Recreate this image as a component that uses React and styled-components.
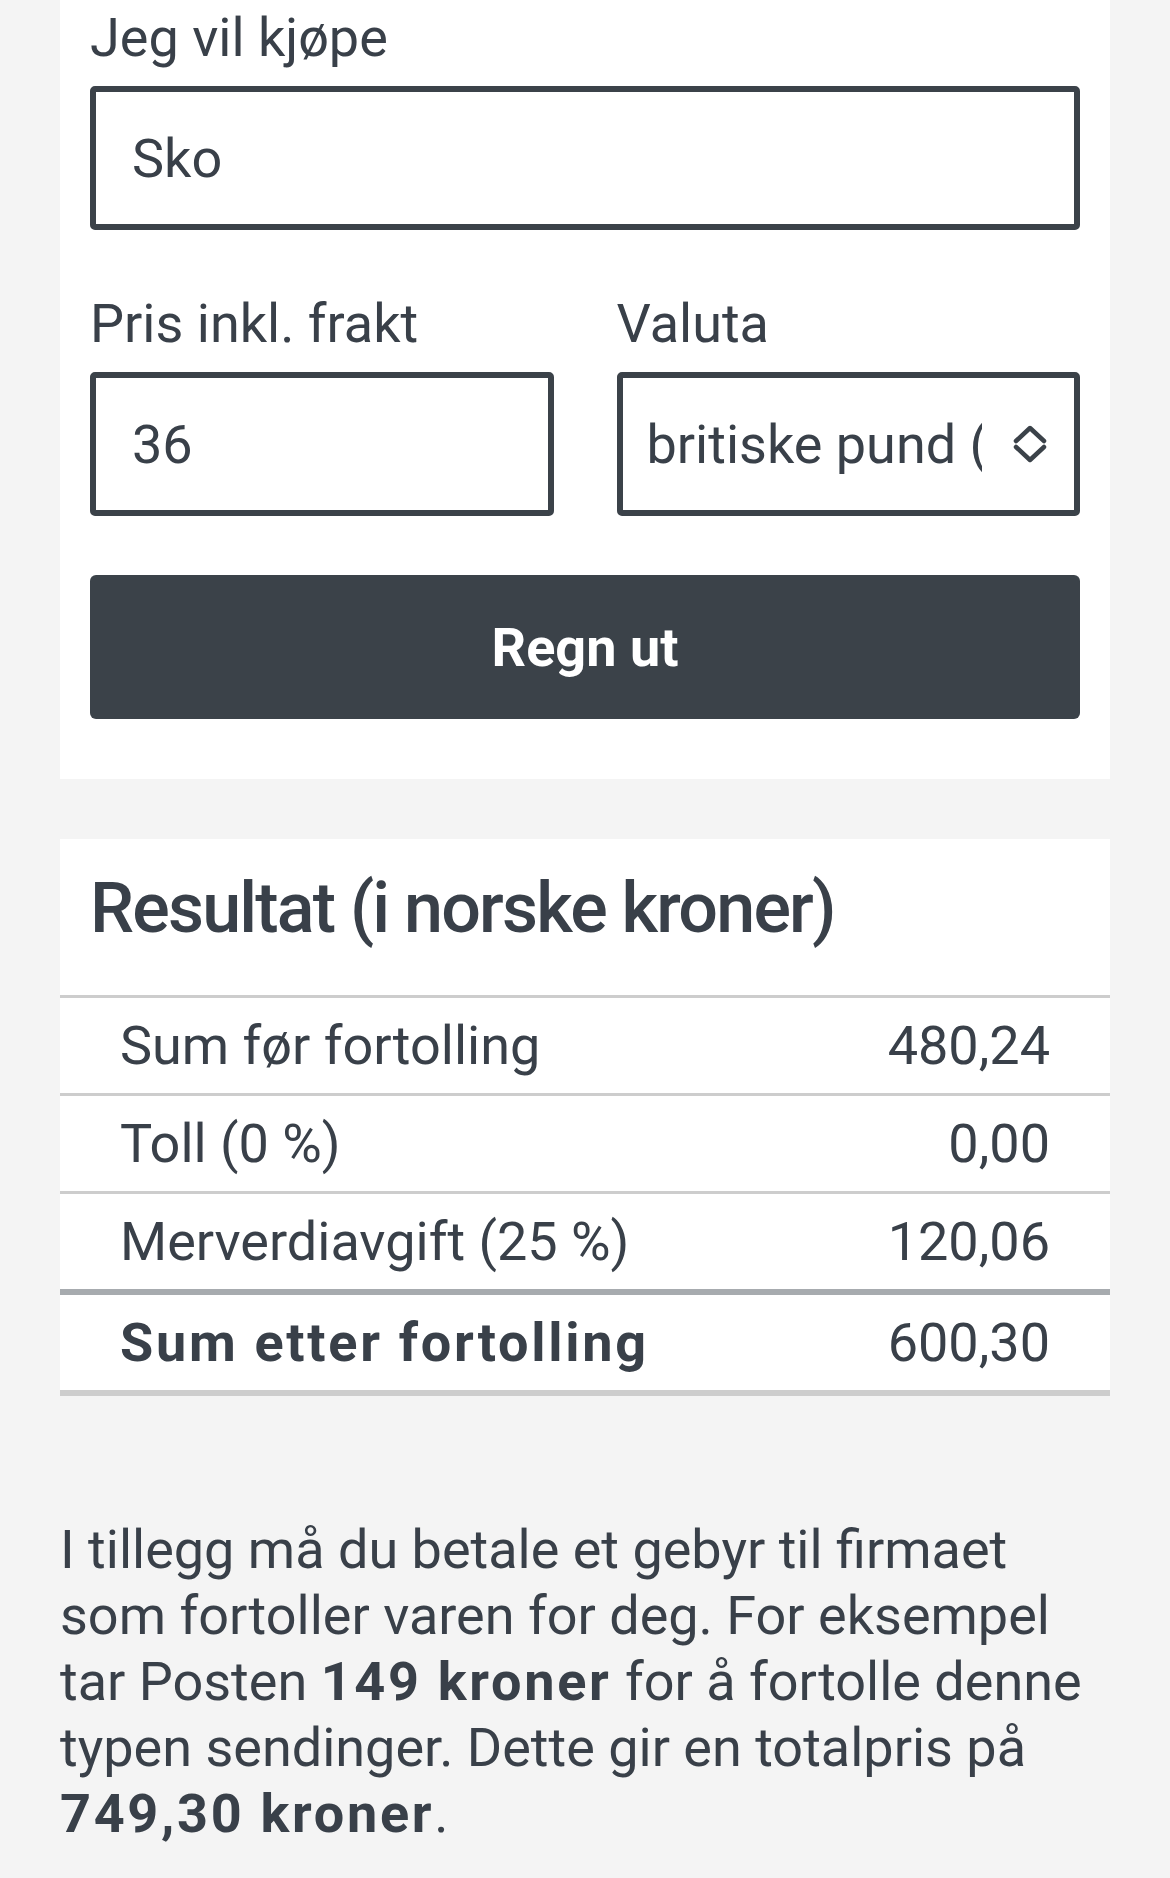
import React from "react"
import styled, { createGlobalStyle } from "styled-components"

const currencies = [
  "amerikanske dollar (USD)",
  "britiske pund (GBP)",
  "euro (EUR)",
  "svenske kroner (SEK)",
]

const resultRows = [
  { label: "Sum før fortolling", value: "480,24" },
  { label: "Toll (0 %)", value: "0,00" },
  { label: "Merverdiavgift (25 %)", value: "120,06" },
]

const GlobalStyle = createGlobalStyle`
  html, body {
    margin: 0;
    padding: 0;
    background: #f4f4f4;
  }
  body {
    font-family: Roboto, "Noto Sans", "Liberation Sans", sans-serif;
    color: #394049;
  }
  * {
    box-sizing: border-box;
  }
`

const App = () => {
  return (
    <>
      <GlobalStyle />
      <Page>
        <FormCard>
          <Field $space={64}>
            <Label htmlFor="item">Jeg vil kjøpe</Label>
            <TextInput id="item" type="text" defaultValue="Sko" />
          </Field>
          <FieldRow>
            <Field>
              <Label htmlFor="price">Pris inkl. frakt</Label>
              <TextInput id="price" type="text" inputMode="decimal" defaultValue="36" />
            </Field>
            <Field>
              <Label htmlFor="currency">Valuta</Label>
              <SelectWrap>
                <Select id="currency" defaultValue="britiske pund (GBP)">
                  {currencies.map(c => (
                    <option key={c} value={c}>
                      {c}
                    </option>
                  ))}
                </Select>
                <SelectIcon viewBox="0 0 34 40" aria-hidden="true">
                  <path d="M3 17 L17 4 L31 17" />
                  <path d="M3 23 L17 36 L31 23" />
                </SelectIcon>
              </SelectWrap>
            </Field>
          </FieldRow>
          <SubmitButton type="button">Regn ut</SubmitButton>
        </FormCard>

        <ResultCard>
          <ResultTitle>Resultat (i norske kroner)</ResultTitle>
          <ResultTable>
            <tbody>
              {resultRows.map(row => (
                <tr key={row.label}>
                  <Cell>{row.label}</Cell>
                  <Cell $right>{row.value}</Cell>
                </tr>
              ))}
              <tr>
                <Cell $total>
                  <Strong>Sum etter fortolling</Strong>
                </Cell>
                <Cell $total $right>
                  600,30
                </Cell>
              </tr>
            </tbody>
          </ResultTable>
        </ResultCard>

        <Note>
          I tillegg må du betale et gebyr til firmaet som fortoller varen for
          deg. For eksempel tar Posten <Strong>149 kroner</Strong> for å
          fortolle denne typen sendinger. Dette gir en totalpris på{" "}
          <Strong>749,30 kroner</Strong>.
        </Note>
      </Page>
    </>
  )
}

export default App

const Page = styled.div`
  padding: 0 60px 60px;
`

const FormCard = styled.form`
  background: #fff;
  padding: 8px 30px 60px;
  display: flex;
  flex-direction: column;
`

const Field = styled.div`
  display: flex;
  flex-direction: column;
  min-width: 0;
  margin-bottom: ${p => p.$space || 0}px;
`

const FieldRow = styled.div`
  display: grid;
  grid-template-columns: 1fr 1fr;
  column-gap: 63px;
  margin-bottom: 59px;
`

const Label = styled.label`
  font-size: 54px;
  line-height: 60px;
  margin-bottom: 18px;
`

const TextInput = styled.input`
  width: 100%;
  height: 144px;
  border: 6px solid #3b4249;
  border-radius: 5px;
  background: #fff;
  padding: 0 36px;
  font-family: inherit;
  font-size: 54px;
  color: #394049;
  outline: none;
`

const SelectWrap = styled.div`
  position: relative;
`

const Select = styled.select`
  appearance: none;
  -webkit-appearance: none;
  width: 100%;
  height: 144px;
  border: 6px solid #3b4249;
  border-radius: 5px;
  background: #fff;
  padding: 0 92px 0 24px;
  font-family: inherit;
  font-size: 54px;
  color: #394049;
  outline: none;
`

const SelectIcon = styled.svg`
  position: absolute;
  right: 33px;
  top: 50%;
  width: 34px;
  height: 40px;
  transform: translateY(-50%);
  fill: none;
  stroke: #3b4249;
  stroke-width: 4.5;
  stroke-linecap: round;
  stroke-linejoin: round;
  pointer-events: none;
`

const SubmitButton = styled.button`
  height: 144px;
  border: none;
  border-radius: 6px;
  background: #3b4249;
  color: #fff;
  font-family: inherit;
  font-size: 54px;
  font-weight: 700;
  cursor: pointer;
`

const ResultCard = styled.section`
  background: #fff;
  margin-top: 60px;
`

const ResultTitle = styled.h2`
  margin: 0;
  padding: 26px 30px 44px;
  font-size: 70px;
  line-height: 86px;
  font-weight: 500;
  letter-spacing: -1.8px;
`

const ResultTable = styled.table`
  width: 100%;
  border-collapse: separate;
  border-spacing: 0;
`

const Cell = styled.td`
  padding: 7px 60px;
  font-size: 54px;
  line-height: 81px;
  text-align: ${p => (p.$right ? "right" : "left")};
  border-top: ${p => (p.$total ? "6px solid #a7abaf" : "3px solid #cdcdcd")};
  border-bottom: ${p => (p.$total ? "6px solid #cdcdcd" : "none")};
`

const Strong = styled.strong`
  font-weight: 700;
  letter-spacing: 2.7px;
`

const Note = styled.p`
  margin: 121px 0 0;
  font-size: 54px;
  line-height: 66px;
`
